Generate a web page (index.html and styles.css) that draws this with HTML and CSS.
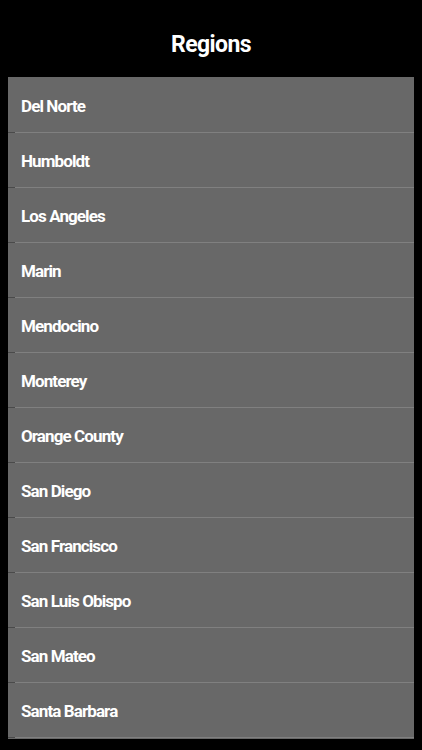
FILE: index.html
```html
<!DOCTYPE html>
<html>
<head>
    <title>Regions</title>
    <link rel="stylesheet" href="styles.css">
</head>
<body>
    <h1 class="title">Regions</h1>
    <ul class="region-list">
        <li class="region">Del Norte</li>
        <li class="region">Humboldt</li>
        <li class="region">Los Angeles</li>
        <li class="region">Marin</li>
        <li class="region">Mendocino</li>
        <li class="region">Monterey</li>
        <li class="region">Orange County</li>
        <li class="region">San Diego</li>
        <li class="region">San Francisco</li>
        <li class="region">San Luis Obispo</li>
        <li class="region">San Mateo</li>
        <li class="region">Santa Barbara</li>
    </ul>
</body>
</html>
```

FILE: styles.css
```css
body {
    font-family: Roboto, "Liberation Sans", sans-serif;
    background-color: #000;
    color: #fff;
    margin: 0;
    padding: 0;
    height: 750px;
    overflow: hidden;
}

.title {
    margin: 0;
    height: 77px;
    line-height: 89px;
    text-align: center;
    font-size: 23px;
    font-weight: 700;
    letter-spacing: -0.6px;
}

.region-list {
    list-style: none;
    margin: 0 8px;
    padding: 1px 0;
    background-color: #686868;
}

.region {
    height: 55px;
    line-height: 56px;
    padding-left: 13px;
    font-size: 17px;
    font-weight: 700;
    letter-spacing: -0.9px;
    border-bottom: 1px solid #808080;
    box-sizing: border-box;
    position: relative;
}

.region::before {
    content: "";
    position: absolute;
    left: 0;
    bottom: -1px;
    width: 7px;
    height: 1px;
    background-color: #4a4a4a;
}
```
